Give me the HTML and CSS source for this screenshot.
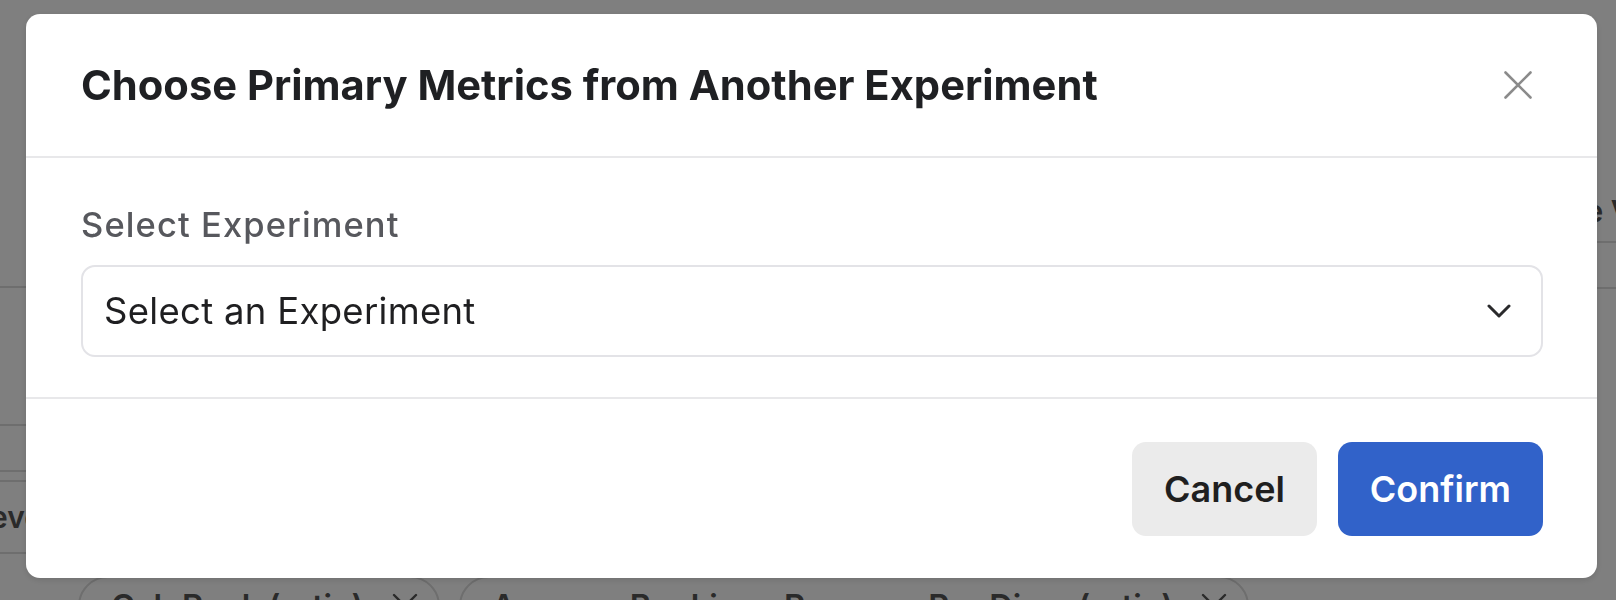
FILE: index.html
```html
<!DOCTYPE html>
<html lang="en">
<head>
<meta charset="utf-8">
<title>Choose Primary Metrics</title>
<link rel="stylesheet" href="styles.css">
</head>
<body>
<div class="page">
  <div class="panel-left">
    <div class="row row-a"></div>
    <div class="row row-b"></div>
    <div class="row row-c"></div>
    <div class="row row-d"></div>
    <div class="row row-e"><span class="bg-text">Level</span></div>
    <div class="chips">
      <span class="chip">Cab Rank (ratio)
        <svg class="chip-x" width="26" height="26" viewBox="0 0 26 26" fill="none" stroke="#555" stroke-width="2.4" stroke-linecap="round"><path d="M2 2 L24 24 M24 2 L2 24"/></svg>
      </span>
      <span class="chip">Average Bookings Revenue Per Diem (ratio)
        <svg class="chip-x" width="26" height="26" viewBox="0 0 26 26" fill="none" stroke="#555" stroke-width="2.4" stroke-linecap="round"><path d="M2 2 L24 24 M24 2 L2 24"/></svg>
      </span>
    </div>
  </div>
  <div class="panel-right">
    <div class="rrow rrow-a"><span class="bg-text">Base Value</span></div>
    <div class="rrow rrow-b"></div>
  </div>
</div>

<div class="overlay"></div>

<div class="modal" role="dialog" aria-labelledby="modal-title">
  <header class="modal-header">
    <h2 id="modal-title" class="modal-title">Choose Primary Metrics from Another Experiment</h2>
    <button class="close-btn" aria-label="Close">
      <svg width="28" height="28" viewBox="0 0 28 28" fill="none" stroke="#8b8b8b" stroke-width="2.6" stroke-linecap="round">
        <path d="M1.5 1.5 L26.5 26.5 M26.5 1.5 L1.5 26.5"/>
      </svg>
    </button>
  </header>
  <section class="modal-body">
    <label class="field-label">Select Experiment</label>
    <div class="select">
      <span class="select-value">Select an Experiment</span>
      <svg class="chevron" width="24" height="14" viewBox="0 0 24 14" fill="none" stroke="#2a2a2c" stroke-width="3" stroke-linecap="round" stroke-linejoin="round">
        <path d="M2 2 L12 12 L22 2"/>
      </svg>
    </div>
  </section>
  <footer class="modal-footer">
    <button class="btn btn-cancel">Cancel</button>
    <button class="btn btn-confirm">Confirm</button>
  </footer>
</div>
</body>
</html>
```

FILE: styles.css
```css
* { box-sizing: border-box; }

html, body {
  margin: 0;
  padding: 0;
  width: 1616px;
  height: 600px;
  overflow: hidden;
  background: #ffffff;
  font-family: "Inter", "Noto Sans", "Liberation Sans", sans-serif;
}

/* ---------- background page ---------- */
.page {
  display: grid;
  grid-template-columns: 1000px 1fr;
  height: 600px;
  overflow: hidden;
}

.panel-left {
  display: flex;
  flex-direction: column;
}

.row {
  border-bottom: 2px solid #dcdcdc;
  flex: none;
}
.row-a { height: 288px; }
.row-b { height: 138px; }
.row-c { height: 46px; }
.row-d { height: 10px; }
.row-e {
  height: 72px;
  display: flex;
  align-items: center;
  margin-left: -27px;
}

.bg-text {
  font-size: 30px;
  font-weight: 600;
  color: #555555;
  white-space: nowrap;
}

.chips {
  display: flex;
  gap: 19px;
  padding: 22px 0 0 78px;
}
.chip {
  display: inline-flex;
  align-items: center;
  gap: 28px;
  height: 60px;
  padding: 0 20px 0 31px;
  border: 2px solid #dcdcdc;
  border-radius: 30px;
  font-size: 32.5px;
  font-weight: 600;
  color: #555555;
  white-space: nowrap;
}
.chip-x { flex: none; }

.panel-right {
  display: flex;
  flex-direction: column;
}
.rrow {
  width: 100%;
  border-bottom: 2px solid #dcdcdc;
  display: flex;
  align-items: center;
}
.rrow-a { height: 243px; padding: 180px 0 0 532px; }
.rrow-b { height: 46px; }

/* ---------- overlay ---------- */
.overlay {
  position: fixed;
  inset: 0;
  background: rgba(0, 0, 0, 0.5);
}

/* ---------- modal ---------- */
.modal {
  position: fixed;
  left: 26px;
  top: 14px;
  width: 1571px;
  background: #ffffff;
  border-radius: 14px;
  box-shadow: 0 2px 6px rgba(0, 0, 0, 0.12);
  display: flex;
  flex-direction: column;
}

.modal-header {
  display: flex;
  align-items: center;
  justify-content: space-between;
  padding: 46px 57px 46px 55px;
  border-bottom: 2px solid #e8e8ea;
}

.modal-title {
  margin: 0;
  font-size: 41.7px;
  line-height: 50px;
  font-weight: 700;
  color: #1f2023;
}

.close-btn {
  width: 44px;
  height: 44px;
  border: 0;
  padding: 0;
  background: transparent;
  display: flex;
  align-items: center;
  justify-content: center;
  cursor: pointer;
}

.modal-body {
  display: flex;
  flex-direction: column;
  padding: 47px 54px 40px 55px;
  border-bottom: 2px solid #e8e8ea;
}

.field-label {
  font-size: 34.5px;
  line-height: 40px;
  font-weight: 500;
  letter-spacing: 1.1px;
  color: #57585d;
  margin-bottom: 20px;
}

.select {
  height: 92px;
  border: 2px solid #e3e3e7;
  border-radius: 14px;
  display: flex;
  align-items: center;
  justify-content: space-between;
  padding: 0 30px 0 21px;
}

.select-value {
  font-size: 36.5px;
  line-height: 44px;
  font-weight: 400;
  letter-spacing: 0.3px;
  color: #1f1f21;
}

.modal-footer {
  display: flex;
  justify-content: flex-end;
  gap: 21px;
  padding: 43px 54px 42px 55px;
}

.btn {
  height: 94px;
  border: 0;
  border-radius: 14px;
  padding: 0 32px;
  font-family: inherit;
  font-size: 36px;
  font-weight: 600;
  cursor: pointer;
}

.btn-cancel {
  background: #ebebeb;
  color: #1f1f1f;
}

.btn-confirm {
  background: #3162c9;
  color: #ffffff;
}
```
